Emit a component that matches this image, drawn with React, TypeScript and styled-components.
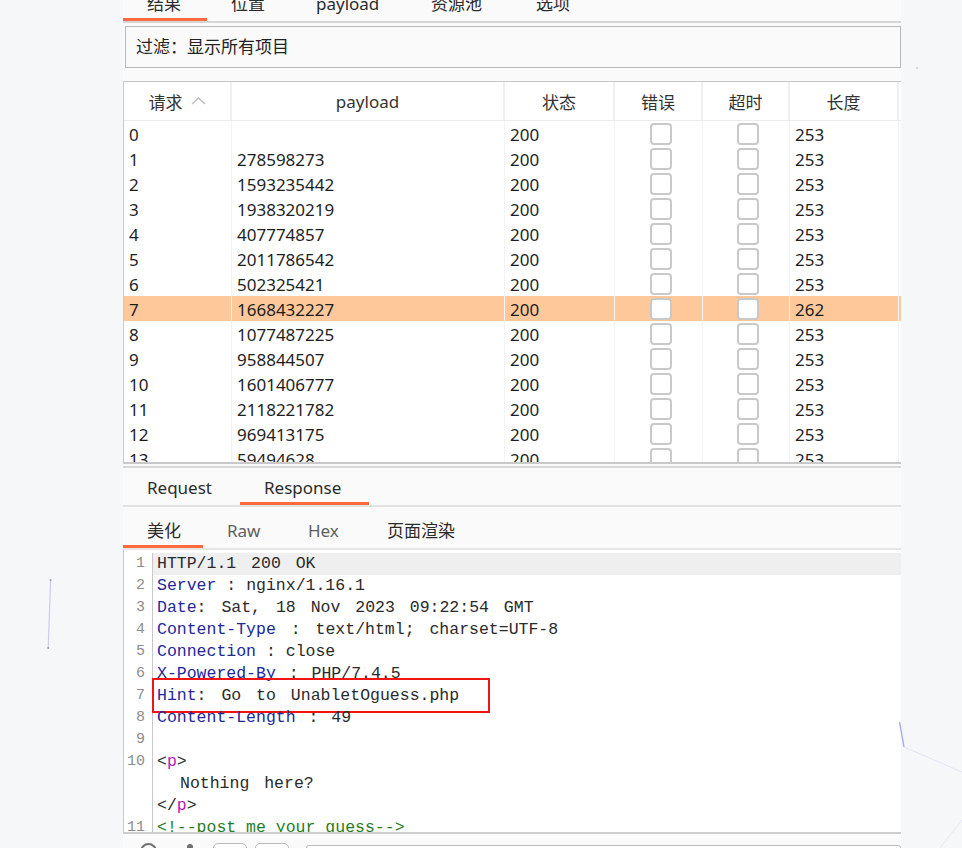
import React from "react";
import styled, { createGlobalStyle } from "styled-components";

const GlobalStyle = createGlobalStyle`
  html, body {
    margin: 0;
    padding: 0;
  }
  body {
    background: #f6f7f9;
    font-family: "Noto Sans", "Noto Sans CJK SC", sans-serif;
    overflow: hidden;
  }
`;

const Page = styled.div`
  position: relative;
  width: 962px;
  height: 848px;
  overflow: hidden;
`;

const Panel = styled.div`
  width: 778px;
  margin: -10px 0 0 123px;
  background: #fafafa;
  display: flex;
  flex-direction: column;
`;

const TabBar = styled.div<{ $line: string }>`
  display: flex;
  border-bottom: 2px solid ${(p) => p.$line};
`;

const Tab = styled.div<{
  $width?: number;
  $height: number;
  $pad: number;
  $active?: boolean;
  $dim?: boolean;
}>`
  flex: 0 0 auto;
  width: ${(p) => (p.$width ? `${p.$width}px` : "auto")};
  box-sizing: border-box;
  height: ${(p) => p.$height + 3}px;
  padding: ${(p) => p.$pad}px 0 0 24px;
  font-size: 17px;
  line-height: ${(p) => p.$height - p.$pad}px;
  color: ${(p) => (p.$dim ? "#5f5f5f" : "#2b2b2b")};
  border-bottom: 3px solid ${(p) => (p.$active ? "#ff6a3d" : "transparent")};
  white-space: nowrap;
`;

const FilterBox = styled.div`
  margin: 3px 0 0 2px;
  height: 40px;
  border: 1px solid #b9b9b9;
  background: #fafafa;
  padding-left: 10px;
  font-size: 17px;
  line-height: 40px;
  color: #222;
`;

const cols = "108px 273px 110px 88px 87px 109px";

const Table = styled.div`
  margin-top: 13px;
  background: #fff;
  border-top: 1px solid #c6c6c6;
  border-left: 1px solid #cacaca;
  border-bottom: 2px solid #c8c8c8;
`;

const HeaderRow = styled.div`
  display: grid;
  grid-template-columns: ${cols};
  height: 38px;
  border-bottom: 1px solid #ececec;
`;

const HeadCell = styled.div`
  display: flex;
  align-items: center;
  justify-content: center;
  gap: 8px;
  box-sizing: border-box;
  border-right: 2px solid #efefef;
  font-size: 17px;
  color: #333;
`;

const Body = styled.div`
  height: 341px;
  overflow: hidden;
`;

const Row = styled.div<{ $selected?: boolean }>`
  display: grid;
  grid-template-columns: ${cols};
  height: 25px;
  background: ${(p) => (p.$selected ? "#ffc89a" : "#fff")};
`;

const Cell = styled.div<{ $center?: boolean }>`
  display: flex;
  align-items: center;
  justify-content: ${(p) => (p.$center ? "center" : "flex-start")};
  padding: 1px 0 0 ${(p) => (p.$center ? 4 : 5)}px;
  box-sizing: border-box;
  border-right: 1px solid #f3f3f3;
  font-size: 17px;
  color: #1e1e1e;
  white-space: nowrap;
`;

const Check = styled.span`
  width: 22px;
  height: 22px;
  box-sizing: border-box;
  border: 2px solid #c9c9c9;
  border-radius: 4px;
  background: #fff;
`;

const Separator = styled.div`
  height: 2px;
  margin-top: 2px;
  background: #d8d8d8;
`;

const Code = styled.div`
  height: 282px;
  box-sizing: border-box;
  padding-top: 3px;
  overflow: hidden;
  background: #fff;
  border-left: 1px solid #c8c8c8;
  font-family: "Liberation Mono", "DejaVu Sans Mono", monospace;
`;

const LineRow = styled.div`
  display: grid;
  grid-template-columns: 29px 1fr;
  height: 22px;
  line-height: 22px;
`;

const Gutter = styled.div`
  box-sizing: border-box;
  border-right: 1px solid #c8c8c8;
  padding-right: 7px;
  text-align: right;
  font-size: 15px;
  color: #8d8d8d;
`;

const LineText = styled.div<{ $current?: boolean; $marked?: boolean; $ws: number }>`
  position: relative;
  padding-left: 4px;
  font-size: 16.5px;
  color: #2a2a2a;
  white-space: pre;
  word-spacing: ${(p) => p.$ws}px;
  background: ${(p) => (p.$current ? "#efefef" : "transparent")};

  ${(p) =>
    p.$marked &&
    `
    &::after {
      content: "";
      position: absolute;
      left: -1px;
      top: -7px;
      width: 338px;
      height: 35px;
      box-sizing: border-box;
      border: 2.5px solid #f01414;
    }
  `}
`;

const Key = styled.span`
  color: #22279c;
`;

const TagName = styled.span`
  color: #b51cb8;
`;

const Comment = styled.span`
  color: #1f7d22;
`;

const Indent = styled.span`
  display: inline-block;
  width: 23px;
`;

const BottomBar = styled.div`
  display: flex;
  align-items: flex-start;
  height: 30px;
  padding: 9px 0 0 17px;
  border-top: 2px solid #cfcfcf;
  background: #fafafa;
`;

const Ring = styled.span`
  width: 17px;
  height: 17px;
  box-sizing: border-box;
  border: 2px solid #6f6f6f;
  border-radius: 50%;
`;

const Dot = styled.span`
  width: 6px;
  height: 6px;
  margin: 1px 0 0 30px;
  border-radius: 50%;
  background: #6f6f6f;
`;

const SmallButton = styled.span<{ $gap: number }>`
  width: 34px;
  height: 22px;
  margin-left: ${(p) => p.$gap}px;
  box-sizing: border-box;
  border: 1px solid #b9b9b9;
  border-radius: 5px;
  background: #fff;
`;

const SearchInput = styled.span`
  flex: 1;
  height: 24px;
  margin: 2px 0 0 17px;
  border: 1px solid #bdbdbd;
  border-radius: 3px;
  background: #fff;
`;

const Overlay = styled.svg`
  position: absolute;
  left: 0;
  top: 0;
  pointer-events: none;
`;

const ChevronUp = () => (
  <svg width="15" height="8" viewBox="0 0 15 8">
    <polyline points="1,7 7.5,1 14,7" fill="none" stroke="#bdbdbd" strokeWidth="1.4" />
  </svg>
);

type LineProps = {
  n?: string;
  current?: boolean;
  marked?: boolean;
  ws?: number;
  children?: React.ReactNode;
};

const CodeLine = ({ n, current, marked, ws = 5, children }: LineProps) => (
  <LineRow>
    <Gutter>{n}</Gutter>
    <LineText $current={current} $marked={marked} $ws={ws}>
      {children}
    </LineText>
  </LineRow>
);

const rows: [string, string][] = [
  ["", "253"],
  ["278598273", "253"],
  ["1593235442", "253"],
  ["1938320219", "253"],
  ["407774857", "253"],
  ["2011786542", "253"],
  ["502325421", "253"],
  ["1668432227", "262"],
  ["1077487225", "253"],
  ["958844507", "253"],
  ["1601406777", "253"],
  ["2118221782", "253"],
  ["969413175", "253"],
  ["59494628", "253"],
];

export default function App() {
  return (
    <Page>
      <GlobalStyle />
      <Panel>
        <TabBar $line="#d6d6d6">
          <Tab $width={84} $height={28} $pad={0} $active>结果</Tab>
          <Tab $width={85} $height={28} $pad={0}>位置</Tab>
          <Tab $width={115} $height={28} $pad={0}>payload</Tab>
          <Tab $width={105} $height={28} $pad={0}>资源池</Tab>
          <Tab $height={28} $pad={0}>选项</Tab>
        </TabBar>

        <FilterBox>过滤：显示所有项目</FilterBox>

        <Table>
          <HeaderRow>
            <HeadCell>
              请求 <ChevronUp />
            </HeadCell>
            <HeadCell>payload</HeadCell>
            <HeadCell>状态</HeadCell>
            <HeadCell>错误</HeadCell>
            <HeadCell>超时</HeadCell>
            <HeadCell>长度</HeadCell>
          </HeaderRow>
          <Body>
            {rows.map(([payload, length], i) => (
              <Row key={i} $selected={i === 7}>
                <Cell>{i}</Cell>
                <Cell>{payload}</Cell>
                <Cell>200</Cell>
                <Cell $center>
                  <Check />
                </Cell>
                <Cell $center>
                  <Check />
                </Cell>
                <Cell>{length}</Cell>
              </Row>
            ))}
          </Body>
        </Table>

        <Separator />

        <TabBar $line="#e2e2e2">
          <Tab $width={117} $height={34} $pad={6}>Request</Tab>
          <Tab $width={129} $height={34} $pad={6} $active>Response</Tab>
        </TabBar>

        <TabBar $line="#e6e6e6">
          <Tab $width={80} $height={38} $pad={9} $active>美化</Tab>
          <Tab $width={81} $height={38} $pad={9} $dim>Raw</Tab>
          <Tab $width={79} $height={38} $pad={9} $dim>Hex</Tab>
          <Tab $height={38} $pad={9}>页面渲染</Tab>
        </TabBar>

        <Code>
          <CodeLine n="1" current>HTTP/1.1 200 OK</CodeLine>
          <CodeLine n="2" ws={0}>
            <Key>Server</Key> : nginx/1.16.1
          </CodeLine>
          <CodeLine n="3">
            <Key>Date</Key>: Sat, 18 Nov 2023 09:22:54 GMT
          </CodeLine>
          <CodeLine n="4">
            <Key>Content-Type</Key> : text/html; charset=UTF-8
          </CodeLine>
          <CodeLine n="5" ws={0}>
            <Key>Connection</Key> : close
          </CodeLine>
          <CodeLine n="6" ws={3}>
            <Key>X-Powered-By</Key> : PHP/7.4.5
          </CodeLine>
          <CodeLine n="7" marked>
            <Key>Hint</Key>: Go to UnabletOguess.php
          </CodeLine>
          <CodeLine n="8" ws={3}>
            <Key>Content-Length</Key> : 49
          </CodeLine>
          <CodeLine n="9" />
          <CodeLine n="10" ws={0}>
            &lt;<TagName>p</TagName>&gt;
          </CodeLine>
          <CodeLine>
            <Indent />Nothing here?
          </CodeLine>
          <CodeLine ws={0}>
            &lt;/<TagName>p</TagName>&gt;
          </CodeLine>
          <CodeLine n="11" ws={0}>
            <Comment>&lt;!--post me your guess--&gt;</Comment>
          </CodeLine>
        </Code>

        <BottomBar>
          <Ring />
          <Dot />
          <SmallButton $gap={20} />
          <SmallButton $gap={8} />
          <SearchInput />
        </BottomBar>
      </Panel>

      <Overlay width="962" height="848" viewBox="0 0 962 848">
        <line x1="50.6" y1="580" x2="48.2" y2="648" stroke="#c9ccf2" strokeWidth="1.2" />
        <circle cx="50.6" cy="580" r="1" fill="#9aa0b0" />
        <circle cx="48.2" cy="648" r="1" fill="#9aa0b0" />
        <line x1="899.5" y1="722" x2="904" y2="747" stroke="#a4a8f6" strokeWidth="1.4" />
        <line x1="904" y1="747" x2="962" y2="772" stroke="#e3e5f3" strokeWidth="1" />
        <line x1="962" y1="820" x2="940" y2="848" stroke="#e6e8f3" strokeWidth="1" />
        <circle cx="917" cy="68" r="0.9" fill="#c4c4c4" />
      </Overlay>
    </Page>
  );
}
